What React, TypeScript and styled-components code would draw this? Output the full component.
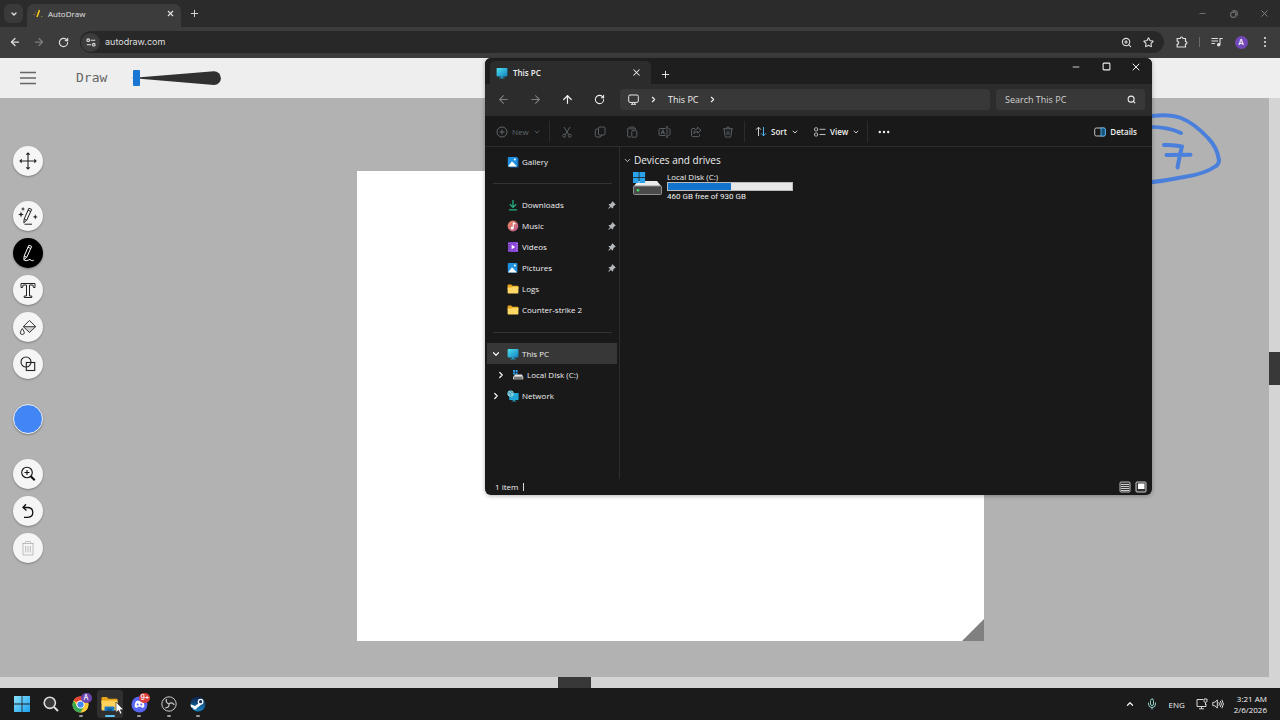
import React from 'react';
import styled, { createGlobalStyle, css } from 'styled-components';
import {
  ArrowLeft, ArrowRight, ArrowUp, ChevronDown, ChevronRight, ChevronUp, Minus, Plus,
  RotateCw, Search, Square, Star, X, ZoomIn, Mic,
} from 'lucide-react';

const uiFont = '"Open Sans", "Noto Sans", sans-serif';

const GlobalStyle = createGlobalStyle`
  *, *::before, *::after { box-sizing: border-box; }
  body { margin: 0; background: #b2b2b2; font-family: ${uiFont}; }
  button, input { font: inherit; color: inherit; }
  button { border: 0; padding: 0; margin: 0; background: none; display: inline-flex; align-items: center; justify-content: center; }
  a { color: inherit; text-decoration: none; }
  svg { display: block; flex: none; }
`;

const Desktop = styled.div`
  position: relative;
  min-height: 100vh;
  display: flex;
  flex-direction: column;
  overflow: hidden;
`;

/* ---------- Browser ---------- */

const TabStrip = styled.div`
  height: 27px;
  display: flex;
  align-items: flex-end;
  background: #2b2b2b;
  color: #e3e3e3;
  padding-left: 4px;
`;

const TabSearch = styled.button`
  width: 19px;
  height: 19px;
  margin-bottom: 4px;
  border-radius: 6px;
  background: #3a3a3a;
`;

const BrowserTab = styled.div`
  width: 154px;
  height: 23px;
  margin-left: 4px;
  padding: 0 6px 4px;
  display: flex;
  align-items: center;
  gap: 5px;
  border-radius: 7px 7px 0 0;
  background: #3c3c3c;
  font-size: 8px;
  line-height: 12px;
`;

const TabTitle = styled.span`
  flex: 1;
`;

const IconButton = styled.button<{ $w?: number; $dim?: boolean }>`
  width: ${p => p.$w ?? 24}px;
  height: 20px;
  flex: none;
  ${p => p.$dim && css`color: #7d7d7d;`}
`;

const NewTab = styled(IconButton)`
  height: 27px;
`;

const WindowControls = styled.div<{ $step: number }>`
  margin-left: auto;
  align-self: stretch;
  display: flex;
  align-items: center;
  color: #858585;
  button { width: ${p => p.$step}px; height: 100%; }
`;

const BrowserBar = styled.div`
  height: 31px;
  display: flex;
  align-items: center;
  background: #3c3c3c;
  color: #dedede;
  padding: 0 3px 1px;
`;

const Omnibox = styled.div`
  flex: 1;
  height: 22px;
  margin: 0 6px 0 5px;
  padding: 0 5px 0 1px;
  display: flex;
  align-items: center;
  border-radius: 11px;
  background: #282828;
`;

const SiteInfo = styled.button`
  width: 19px;
  height: 19px;
  border-radius: 50%;
  background: #3c3c3c;
`;

const UrlInput = styled.input`
  flex: 1;
  min-width: 0;
  margin-left: 5px;
  padding: 0;
  border: 0;
  outline: 0;
  background: none;
  font: 400 9px/14px Inter, sans-serif;
`;

const BarRule = styled.span`
  width: 1px;
  height: 10px;
  margin: 0 5px;
  background: #6a6a6a;
`;

const Avatar = styled.span`
  width: 13px;
  height: 13px;
  border-radius: 50%;
  background: #7248b9;
  color: #fff;
  font: 500 8px/13px Inter, sans-serif;
  text-align: center;
`;

/* ---------- AutoDraw page ---------- */

const PageHeader = styled.header`
  height: 40px;
  display: flex;
  align-items: center;
  padding-left: 20px;
  background: #eeeeee;
  color: #666;
`;

const ToolName = styled.span`
  margin: 0 24px 0 40px;
  font: 400 13px/20px "DejaVu Sans Mono", monospace;
`;

const Viewport = styled.div`
  flex: 1;
  display: grid;
  grid-template-columns: minmax(0, 1fr) 11px;
  grid-template-rows: minmax(0, 1fr) 11px;
  background: #d4d4d4;
`;

const Workspace = styled.main`
  position: relative;
  display: flex;
  align-items: flex-start;
  background: #b2b2b2;
`;

const ScrollRail = styled.div<{ $vertical?: boolean }>`
  display: flex;
  flex-direction: ${p => (p.$vertical ? 'column' : 'row')};
  ${p => (p.$vertical ? css`padding-top: 254px;` : css`padding-left: 558px;`)}
  &::before {
    content: '';
    background: #383838;
    flex: 0 0 33px;
  }
`;

const ToolRail = styled.nav`
  display: flex;
  flex-direction: column;
  gap: 25px;
  padding: 48px 13px 0;
`;

const ToolGroup = styled.div`
  display: flex;
  flex-direction: column;
  gap: 7px;
`;

const ToolButton = styled.button<{ $active?: boolean; $faded?: boolean }>`
  width: 30px;
  height: 30px;
  border-radius: 50%;
  background: ${p => (p.$active ? '#000' : '#f5f5f5')};
  color: ${p => (p.$active ? '#fff' : p.$faded ? '#bdbdbd' : '#222')};
  box-shadow: 0 1px 2px rgba(0, 0, 0, 0.3);
`;

const ColorButton = styled(ToolButton)`
  border: 1px solid #f5f5f5;
  background: #4285f4;
`;

const Artboard = styled.div`
  position: relative;
  flex: 0 1 627px;
  height: 470px;
  margin: 73px 0 0 301px;
  background: #fff;
  &::after {
    content: '';
    position: absolute;
    right: 0;
    bottom: 0;
    border-style: solid;
    border-width: 0 0 22px 22px;
    border-color: transparent transparent #808080;
  }
`;

const Scribble = styled.svg`
  position: absolute;
  left: 1140px;
  top: 10px;
`;

/* ---------- File Explorer ---------- */

const ExplorerWindow = styled.section`
  position: absolute;
  left: 485px;
  top: 58px;
  width: 667px;
  display: flex;
  flex-direction: column;
  overflow: hidden;
  border-radius: 6px;
  background: #191919;
  color: #f0f0f0;
  font-size: 8px;
  line-height: 12px;
  box-shadow: 0 1px 4px rgba(0, 0, 0, 0.3);
`;

const ExplorerTitle = styled.div`
  height: 26px;
  display: flex;
  align-items: flex-end;
  padding-left: 5px;
  background: #1e1e1e;
`;

const ExplorerTab = styled.div`
  width: 161px;
  height: 23px;
  padding: 0 9px 0 6px;
  display: flex;
  align-items: center;
  gap: 5px;
  border-radius: 5px 5px 0 0;
  background: #2c2c2c;
  font-weight: 600;
`;

const ExplorerControls = styled(WindowControls)`
  color: #f0f0f0;
  padding: 0 1px 9px 0;
`;

const NavBar = styled.div`
  height: 32px;
  display: flex;
  align-items: center;
  padding: 0 7px 1px 2px;
  background: #2c2c2c;
  font-size: 9px;
`;

const AddressBar = styled.div`
  flex: 1;
  height: 21px;
  margin-left: 5px;
  padding-left: 8px;
  display: flex;
  align-items: center;
  gap: 10px;
  border-radius: 3px;
  background: #383838;
`;

const SearchBox = styled.label`
  width: 149px;
  height: 21px;
  margin-left: 6px;
  padding: 0 9px;
  display: flex;
  align-items: center;
  border-radius: 3px;
  background: #383838;
  input {
    flex: 1;
    min-width: 0;
    padding: 0;
    border: 0;
    outline: 0;
    background: none;
  }
  input::placeholder { color: #d2d2d2; opacity: 1; }
`;

const CommandBar = styled.div`
  height: 31px;
  display: flex;
  align-items: center;
  padding: 1px 15px 0 1px;
  border-bottom: 1px solid #2d2d2d;
`;

const Command = styled.button<{ $w?: number; $dim?: boolean; $bold?: boolean }>`
  height: 24px;
  gap: 4px;
  ${p => p.$w && css`width: ${p.$w}px;`}
  color: ${p => (p.$dim ? '#60686c' : '#f0f0f0')};
  font-weight: ${p => (p.$bold ? 600 : 400)};
`;

const MenuCommand = styled(Command)`
  justify-content: flex-start;
  padding-left: 10px;
`;

const CommandRule = styled.span`
  width: 1px;
  height: 21px;
  background: #2b2b2b;
`;

const Spacer = styled.span`
  flex: 1;
`;

const ExplorerBody = styled.div`
  display: flex;
  height: 332px;
`;

const Sidebar = styled.nav`
  width: 135px;
  padding: 4px 2px 0;
  border-right: 1px solid #2d2d2d;
`;

const SideGroup = styled.ul<{ $h: number }>`
  list-style: none;
  margin: 0;
  padding: 0;
  height: ${p => p.$h}px;
  display: grid;
  grid-auto-rows: 1fr;
`;

const SideRule = styled.hr`
  height: 1px;
  border: 0;
  margin: 11px 5px 10px 6px;
  background: #333;
`;

const SideItem = styled.li<{ $selected?: boolean }>`
  display: flex;
  background: ${p => (p.$selected ? '#373737' : 'transparent')};
`;

const SideLink = styled.a<{ $nested?: boolean }>`
  flex: 1;
  display: flex;
  align-items: center;
  padding: 0 1px 0 ${p => (p.$nested ? 9 : 4)}px;
`;

const Twisty = styled.span`
  width: 16px;
  display: flex;
  align-items: center;
`;

const SideLabel = styled.span`
  flex: 1;
  margin-left: 3px;
  white-space: nowrap;
`;

const FileArea = styled.div`
  flex: 1;
  padding: 6px 0 0 3px;
`;

const GroupTitle = styled.h2`
  margin: 0;
  display: flex;
  align-items: center;
  gap: 2px;
  font-size: 10px;
  font-weight: 400;
  line-height: 14px;
`;

const Drive = styled.a`
  display: flex;
  gap: 5px;
  padding: 4px 0 0 10px;
`;

const DriveInfo = styled.div`
  width: 126px;
  display: flex;
  flex-direction: column;
  line-height: 11px;
`;

const DriveSpace = styled.span`
  font-family: Roboto, sans-serif;
`;

const UsageBar = styled.div`
  height: 9px;
  background: #e6e6e6;
  border: 1px solid #bcbcbc;
`;

const UsageFill = styled.div`
  height: 100%;
  background: #1173cc;
`;

const StatusBar = styled.footer`
  height: 16px;
  display: flex;
  align-items: center;
  gap: 4px;
  padding: 0 5px 0 10px;
`;

const StatusRule = styled.span`
  width: 1px;
  height: 8px;
  margin-left: 1px;
  background: #ddd;
`;

/* ---------- Taskbar ---------- */

const Taskbar = styled.footer`
  position: relative;
  height: 32px;
  display: flex;
  align-items: center;
  justify-content: space-between;
  padding: 0 13px 0 7px;
  background: #1b1b1b;
  color: #f2f2f2;
  font-size: 8px;
  line-height: 11px;
`;

const PinnedApps = styled.div`
  width: 206px;
  display: grid;
  grid-template-columns: repeat(7, 1fr);
  justify-items: center;
`;

const TaskButton = styled.button<{ $running?: boolean; $active?: boolean }>`
  position: relative;
  width: 26px;
  height: 28px;
  border-radius: 3px;
  background: ${p => (p.$active ? '#303030' : 'transparent')};
  &::after {
    content: '';
    display: ${p => (p.$running ? 'block' : 'none')};
    position: absolute;
    bottom: 1px;
    left: 50%;
    transform: translateX(-50%);
    width: ${p => (p.$active ? 10 : 4)}px;
    height: 2px;
    border-radius: 1px;
    background: ${p => (p.$active ? '#5cc3f5' : '#9a9a9a')};
  }
`;

const Badge = styled.span<{ $color: string }>`
  position: absolute;
  top: 3px;
  right: 2px;
  width: 11px;
  height: 10px;
  border-radius: 5px;
  background: ${p => p.$color};
  color: #fff;
  font: 500 7px/10px Inter, sans-serif;
  text-align: center;
`;

const Tray = styled.div`
  display: flex;
  align-items: center;
`;

const TrayPair = styled.button`
  gap: 4px;
  margin: 0 10px 0 5px;
`;

const Clock = styled.div`
  text-align: right;
`;

const Pointer = styled.svg`
  position: absolute;
  left: 115px;
  top: 13px;
`;

/* ---------- Icons ---------- */

const MonitorIcon = ({ size = 12 }: { size?: number }) => (
  <svg width={size} height={size} viewBox="0 0 12 12">
    <defs>
      <linearGradient id="screen" x1="0" y1="0" x2="1" y2="1">
        <stop offset="0" stopColor="#4be0ec" /><stop offset="1" stopColor="#1582c4" />
      </linearGradient>
    </defs>
    <path d="M5 9h2v1.6h1.6v.8H3.4v-.8H5z" fill="#2a93b8" />
    <rect x=".6" y="1" width="10.8" height="8.4" rx=".8" fill="url(#screen)" />
  </svg>
);

const NetworkIcon = () => (
  <svg width="12" height="12" viewBox="0 0 12 12">
    <path d="M6 9.600h2v1.200h1.400v.8H4.600v-.8H6z" fill="#2a93b8" />
    <rect x="2.200" y="3" width="9.400" height="7" rx=".7" fill="#22a6d6" />
    <circle cx="3.600" cy="3.600" r="3.200" fill="#86d4dc" />
    <path d="M1 3h2l1 1.300L3 6M4 .6 3.600 2 6.400 3" stroke="#2d7fae" strokeWidth=".8" fill="none" />
  </svg>
);

const PictureIcon = ({ stacked }: { stacked?: boolean }) => (
  <svg width="12" height="12" viewBox="0 0 12 12">
    {stacked && <path d="M2.500 2h9v9.500h-9z" fill="#1460a8" />}
    <rect x=".8" y="1" width="9.600" height="9.600" rx=".8" fill="#1f8fe0" />
    <path d="M1 10.500 5 5.300l5 5.200z" fill="#fff" />
    <circle cx="7.800" cy="3.600" r="1" fill="#fff" />
  </svg>
);

const DownloadIcon = () => (
  <svg width="12" height="12" viewBox="0 0 12 12" fill="none" stroke="#26b07f" strokeWidth="1.300">
    <path d="M6 1v7M2.800 5.200 6 8.400l3.200-3.200M2 10.800h8" />
  </svg>
);

const MusicIcon = () => (
  <svg width="12" height="12" viewBox="0 0 12 12">
    <defs><linearGradient id="music" x1="0" y1="0" x2="1" y2="1"><stop offset="0" stopColor="#f08a5c" /><stop offset="1" stopColor="#b5568f" /></linearGradient></defs>
    <circle cx="6" cy="6" r="5.400" fill="url(#music)" />
    <path d="M6.300 2.600v5" stroke="#fff" strokeWidth="1" />
    <path d="M6 2.500l2.400.6v1.300L6 3.800z" fill="#fff" />
    <circle cx="5.200" cy="8" r="1.500" fill="#fff" />
  </svg>
);

const VideoIcon = () => (
  <svg width="12" height="12" viewBox="0 0 12 12">
    <rect x="1" y="1" width="10" height="10" rx="1" fill="#8b45d6" />
    <path d="M1 1h2v10H1z" fill="#6a2fb5" />
    <path d="M2 2v8M10 2v8" stroke="#d9b8ff" strokeWidth=".9" strokeDasharray="1 1.300" />
    <path d="M4.700 3.800 8.200 6 4.700 8.200z" fill="#fff" />
  </svg>
);

const FolderIcon = () => (
  <svg width="12" height="12" viewBox="0 0 12 12">
    <path d="M.6 2.200q0-.7.7-.7h3l1.200 1.300h5.200q.7 0 .7.7V6H.6z" fill="#e9a51e" />
    <path d="M.6 4.600h4l1-.9h5.800v6.100q0 .7-.7.7H1.300q-.7 0-.7-.7z" fill="#ffd866" />
  </svg>
);

const SmallDriveIcon = () => (
  <svg width="12" height="12" viewBox="0 0 12 12">
    <path d="M1 1h2v2H1zM3.600 1h2v2h-2zM1 3.600h2v2H1zM3.600 3.600h2v2h-2z" fill="#2f9be6" />
    <path d="M3 5.600h7l1 2.200H1.500z" fill="#e8e8e8" />
    <path d="M1 7.600h10.300v2.800H1z" fill="#c5c5c5" />
    <path d="M2 8.400h8.300v1.200H2z" fill="#444" />
  </svg>
);

const DriveIcon = () => (
  <svg width="29" height="26" viewBox="0 0 29 26">
    <path d="M5 10h19l4.500 5.500H.5z" fill="#ececec" />
    <rect x=".5" y="15" width="28" height="8.500" rx="1" fill="#4a4a4a" stroke="#909090" strokeWidth="1" />
    <circle cx="5" cy="19.200" r="1.300" fill="#3fe05d" />
    <path d="M0 1h5.700v5.200H0zM6.400 1h5.700v5.200H6.400zM0 6.900h5.700v5.200H0zM6.400 6.900h5.700v5.200H6.400z" fill="#2aa3ea" />
  </svg>
);

const PinIcon = () => (
  <svg width="8" height="8" viewBox="0 0 8 8">
    <path d="M4.500.3 7.700 3.500 7 4.300 6.500 4.300 5.200 5.700 5.200 7 4.500 7.500 2.900 5.900.9 7.700.3 7.200 2.100 5.100.5 3.600 1.100 2.900 2.500 2.900 3.800 1.600 3.700 1.100z" fill="#b4b8ba" />
  </svg>
);

const PcOutline = () => (
  <svg width="11" height="11" viewBox="0 0 11 11" fill="none" stroke="#e6e6e6">
    <rect x=".7" y="1" width="9.600" height="7.400" rx="1.300" /><path d="M3 10.300h5M4.300 8.500v1.600M6.700 8.500v1.600" />
  </svg>
);

const CutIcon = () => (
  <svg width="12" height="12" viewBox="0 0 12 12" fill="none" stroke="currentColor" strokeWidth=".9">
    <path d="M3 1l4.700 7.500M9 1 4.300 8.500" /><circle cx="3.200" cy="9.700" r="1.500" /><circle cx="8.800" cy="9.700" r="1.500" />
  </svg>
);

const CopyIcon = () => (
  <svg width="12" height="12" viewBox="0 0 12 12" fill="none" stroke="currentColor" strokeWidth=".9">
    <rect x="4.500" y="1" width="6.500" height="8" rx="1.200" /><path d="M4.500 3H2.700Q1.300 3 1.300 4.400V9.500Q1.300 11 2.800 11H6q1.300 0 1.500-1.800" />
  </svg>
);

const PasteIcon = () => (
  <svg width="12" height="12" viewBox="0 0 12 12" fill="none" stroke="currentColor" strokeWidth=".9">
    <path d="M5 11H2.700q-1 0-1-1V3q0-1 1-1H4M8 2q1.500 0 1.500 1v1" /><rect x="4" y="1" width="4" height="2" rx=".8" /><rect x="5.800" y="4.700" width="5" height="6.500" rx="1" />
  </svg>
);

const RenameIcon = () => (
  <svg width="13" height="12" viewBox="0 0 13 12" fill="none" stroke="currentColor" strokeWidth=".9">
    <path d="M7.500 2.500H2.200Q1 2.500 1 3.700v4.600q0 1.200 1.200 1.200h5.300M10.300 2.500q1.700 0 1.700 1.200v4.600q0 1.200-1.700 1.200M9 1v10M7.800.8h2.400M7.800 11.200h2.400M3 8.200l1.800-4.500 1.800 4.500M3.600 6.800h2.400" />
  </svg>
);

const ShareIcon = () => (
  <svg width="12" height="12" viewBox="0 0 12 12" fill="none" stroke="currentColor" strokeWidth=".9">
    <path d="M5 2.500H2.800q-1.300 0-1.300 1.300v5.500q0 1.300 1.300 1.300h5.500q1.300 0 1.300-1.300V8.300M7.500 1.200l3.500 3-3.500 3V5.500Q5 5.400 3.800 7.800 4 3.300 7.500 2.900z" />
  </svg>
);

const DeleteIcon = () => (
  <svg width="12" height="12" viewBox="0 0 12 12" fill="none" stroke="currentColor" strokeWidth=".9">
    <path d="M1 2.800h10M4.500 2.700q0-1.700 1.500-1.700t1.500 1.700M2.200 2.900l.8 7q.1 1.200 1.200 1.200h3.600q1.100 0 1.200-1.200l.8-7M5 5v4M7 5v4" />
  </svg>
);

const SortIcon = () => (
  <svg width="12" height="11" viewBox="0 0 12 11" fill="none" strokeWidth="1">
    <path d="M3.500 10V1.200M1 3.700l2.500-2.500L6 3.700" stroke="#cfcfcf" /><path d="M8.500 1v8.800M6 7.300l2.500 2.500L11 7.300" stroke="#4cb2f0" />
  </svg>
);

const ViewIcon = () => (
  <svg width="12" height="10" viewBox="0 0 12 10" fill="none" stroke="#cfcfcf" strokeWidth=".9">
    <rect x=".6" y=".8" width="3" height="3" rx=".8" /><rect x=".6" y="6" width="3" height="3" rx=".8" /><path d="M5.500 2.300h6M5.500 7.500h6" />
  </svg>
);

const DetailsIcon = () => (
  <svg width="12" height="10" viewBox="0 0 12 10">
    <rect x=".7" y="1" width="10.600" height="8" rx="1.600" fill="none" stroke="#d5d5d5" strokeWidth=".9" />
    <path d="M7 1h2.700q1.600 0 1.600 1.600v4.800Q11.300 9 9.700 9H7z" fill="#15527a" stroke="#4cb2f0" strokeWidth=".9" />
  </svg>
);

const MoveIcon = () => (
  <svg width="20" height="20" viewBox="0 0 20 20" fill="none" stroke="currentColor" strokeWidth="1.100">
    <path d="M10 2v16M2 10h16M8.300 3.700 10 2l1.700 1.700M8.300 16.300 10 18l1.700-1.700M3.700 8.300 2 10l1.700 1.700M16.300 8.300 18 10l-1.700 1.700" />
  </svg>
);

const PencilIcon = ({ sparkles }: { sparkles?: boolean }) => (
  <svg width="20" height="20" viewBox="0 0 20 20" fill="none" stroke="currentColor" strokeWidth="1">
    <path d="M10.900 2.200 6.200 13 5.800 16.800 8.700 14.300 13.700 3.400zM6.200 13 8.700 14.300M10 4.200l2.800 1.300" />
    {sparkles ? (
      <>
        <path d="M6.500 18.200h7.500" />
        <path d="m3 5.500.8 2.200L6 8.500 3.800 9.300 3 11.500 2.200 9.300 0 8.500 2.200 7.700zM5 .8l.6 1.600 1.600.6-1.600.6L5 5.200 4.400 3.600 2.800 3l1.600-.6zM17.300 8.300l.7 1.900 1.900.7-1.900.7-.7 1.900-.7-1.900-1.900-.7 1.900-.7z" fill="currentColor" stroke="none" />
      </>
    ) : <path d="M6 16.800q2 1.800 4.200.3t3 .3q.8.800 2.500-.2" />}
  </svg>
);

const TypeIcon = () => (
  <svg width="20" height="20" viewBox="0 0 20 20" fill="none" stroke="currentColor" strokeWidth="1">
    <path d="M3 3.500h14v4h-1.500L14.800 5h-3.300v11h2.300v1.500H6.200V16h2.300V5H5.200L4.500 7.500H3z" />
  </svg>
);

const FillIcon = () => (
  <svg width="20" height="20" viewBox="0 0 20 20" fill="none" stroke="currentColor" strokeWidth=".9">
    <path d="M5.500 9.800h12l-6 5.600z" fill="#cfcfcf" stroke="none" />
    <path d="M11.500 3.500 17.700 9.600 11.500 15.500 5.300 9.600zM5.300 9.700h12.400M4.300 11.500q-4 5.700 0 6 4-.3 0-6z" />
  </svg>
);

const ShapesIcon = () => (
  <svg width="20" height="20" viewBox="0 0 20 20" fill="none" stroke="currentColor" strokeWidth="1.100">
    <circle cx="8" cy="8" r="5" /><rect x="8.300" y="8.500" width="8.400" height="8" />
  </svg>
);

const ZoomTool = () => (
  <svg width="20" height="20" viewBox="0 0 20 20" fill="none" stroke="#111" strokeWidth="1.100">
    <circle cx="9" cy="8.500" r="5.300" /><path d="M6.500 8.500h5M9 6v5" /><path d="m12.700 12.300 4 4" strokeWidth="2" />
  </svg>
);

const UndoTool = () => (
  <svg width="20" height="20" viewBox="0 0 20 20" fill="none" stroke="#111" strokeWidth="1.300">
    <path d="M8 3.300 5 6.500l3.500 3M5.300 6.500h4.500q5 .3 5 5t-5 4.800H6" />
  </svg>
);

const BinTool = () => (
  <svg width="20" height="20" viewBox="0 0 20 20" fill="none" stroke="currentColor" strokeWidth="1">
    <path d="M4 5.500h12M7 5.300 7.700 3.500h4.600l.7 1.800M5 5.500V17h10V5.500M7.700 8v6.500M10 8v6.500M12.300 8v6.500" />
  </svg>
);

const ChromeIcon = () => (
  <svg width="17" height="17" viewBox="0 0 16 16">
    <circle cx="8" cy="8" r="7.500" fill="#fcc934" />
    <path d="M8 8 1.500 4.250A7.500 7.500 0 0 1 14.500 4.250H8z" fill="#ea4335" />
    <path d="M8 8v-3.700h6.500A7.500 7.500 0 0 1 8 15.500L11.300 9.800z" fill="#fcc934" />
    <path d="M1.500 4.250A7.500 7.500 0 0 0 8 15.500l3.200-5.700L8 11.600 4.700 9.700z" fill="#34a853" />
    <circle cx="8" cy="8" r="3.700" fill="#fff" /><circle cx="8" cy="8" r="2.900" fill="#4285f4" />
  </svg>
);

const ExplorerIcon = () => (
  <svg width="17" height="16" viewBox="0 0 17 16">
    <path d="M.5 2q0-1 1-1h4.300l1.700 1.700h8q1 0 1 1V8H.5z" fill="#e8a317" />
    <path d="M.5 4.500h16v9q0 1-1 1h-14q-1 0-1-1z" fill="#ffd35c" />
    <path d="M3.500 15v-3.500q0-1 1-1h8q1 0 1 1V15z" fill="#1a7ac0" /><path d="M6 12.500h5V15H6z" fill="#0f5b96" />
  </svg>
);

const DiscordIcon = () => (
  <svg width="17" height="17" viewBox="0 0 17 17">
    <circle cx="8.500" cy="8.500" r="8" fill="#5865f2" />
    <path d="M5 5.300q1.200-.7 2.300-.8l.3.600h1.800l.3-.6q1.100.1 2.300.8 1.600 2.700 1.400 5.500-1.100.9-2.500 1.200l-.6-1 .5-.3H6.200l.5.300-.6 1q-1.400-.3-2.500-1.200Q3.400 8 5 5.300z" fill="#fff" />
    <circle cx="6.700" cy="8.600" r="1" fill="#5865f2" /><circle cx="10.300" cy="8.600" r="1" fill="#5865f2" />
  </svg>
);

const ObsIcon = () => (
  <svg width="16" height="16" viewBox="0 0 16 16" fill="none" stroke="#c9c9c9">
    <circle cx="8" cy="8" r="7.200" fill="#222" />
    <path d="M8 8Q4.300 6.800 5.500 3M8 8q2.700-2.700 5.300.8M8 8q.3 3.800-3.700 3.800" strokeWidth="1.200" />
  </svg>
);

const SteamIcon = () => (
  <svg width="16" height="16" viewBox="0 0 16 16">
    <defs><linearGradient id="steam" x1="0" y1="0" x2="0" y2="1"><stop offset="0" stopColor="#0d1c44" /><stop offset="1" stopColor="#1687c4" /></linearGradient></defs>
    <circle cx="8" cy="8" r="7.500" fill="url(#steam)" />
    <path d="M.6 8.200 5 10l3-2.300 2-2 2 2-2.400 2.400-2.700 2q-.3 1.500-1.900 1.500t-2-1.600L.9 10.900z" fill="#fff" />
    <circle cx="10.600" cy="5.700" r="2.900" fill="#fff" /><circle cx="10.600" cy="5.700" r="1.600" fill="#16315f" />
  </svg>
);

/* ---------- Composition ---------- */

const sideItems = [
  { label: 'Downloads', icon: <DownloadIcon />, pinned: true },
  { label: 'Music', icon: <MusicIcon />, pinned: true },
  { label: 'Videos', icon: <VideoIcon />, pinned: true },
  { label: 'Pictures', icon: <PictureIcon />, pinned: true },
  { label: 'Logs', icon: <FolderIcon /> },
  { label: 'Counter-strike 2', icon: <FolderIcon /> },
];

interface SideRowProps {
  label: string;
  icon: React.ReactNode;
  pinned?: boolean;
  selected?: boolean;
  nested?: boolean;
  twisty?: React.ReactNode;
}

const SideRow = ({ label, icon, pinned, selected, nested, twisty }: SideRowProps) => (
  <SideItem $selected={selected}>
    <SideLink href="#" $nested={nested}>
      <Twisty>{twisty}</Twisty>
      {icon}
      <SideLabel>{label}</SideLabel>
      {pinned && <PinIcon />}
    </SideLink>
  </SideItem>
);

const Browser = () => (
  <>
    <TabStrip>
      <TabSearch aria-label="Search tabs"><ChevronDown size={8} strokeWidth={4} /></TabSearch>
      <BrowserTab>
        <svg width="10" height="10" viewBox="0 0 10 10">
          <path d="M6.500 1 4 8" stroke="#f5c518" strokeWidth="1.600" /><path d="M.5 5.500h1.500M8 7.500h1.500M2 3l1 .6" stroke="#8a7a3a" />
        </svg>
        <TabTitle>AutoDraw</TabTitle>
        <button aria-label="Close tab"><X size={9} strokeWidth={3} /></button>
      </BrowserTab>
      <NewTab $w={26} aria-label="New tab"><Plus size={11} strokeWidth={2} /></NewTab>
      <WindowControls $step={31}>
        <button aria-label="Minimize"><Minus size={9} strokeWidth={2} /></button>
        <button aria-label="Restore">
          <svg width="8" height="8" viewBox="0 0 8 8" fill="none" stroke="currentColor"><rect x=".8" y="2.200" width="5" height="5" rx="1" /><path d="M2.500.8h3q1.700 0 1.700 1.700v3" /></svg>
        </button>
        <button aria-label="Close"><X size={11} strokeWidth={2} /></button>
      </WindowControls>
    </TabStrip>
    <BrowserBar>
      <IconButton aria-label="Back"><ArrowLeft size={12} strokeWidth={2.500} /></IconButton>
      <IconButton $dim aria-label="Forward"><ArrowRight size={12} strokeWidth={2.500} /></IconButton>
      <IconButton aria-label="Reload"><RotateCw size={11} strokeWidth={2.600} /></IconButton>
      <Omnibox>
        <SiteInfo aria-label="Site information">
          <svg width="10" height="9" viewBox="0 0 10 9" fill="none" stroke="#e0e0e0" strokeWidth="1.100">
            <circle cx="2.200" cy="2.200" r="1.300" /><path d="M4.800 2.200h4.400M.8 6.700h4.400" /><circle cx="7.800" cy="6.700" r="1.300" />
          </svg>
        </SiteInfo>
        <UrlInput aria-label="Address" defaultValue="autodraw.com" />
        <IconButton $w={22} aria-label="Zoom"><ZoomIn size={11} strokeWidth={2.400} /></IconButton>
        <IconButton $w={22} aria-label="Bookmark"><Star size={11} strokeWidth={2.400} /></IconButton>
      </Omnibox>
      <IconButton $w={24} aria-label="Extensions">
        <svg width="12" height="12" viewBox="0 0 12 12" fill="none" stroke="currentColor" strokeWidth="1.200">
          <path d="M1.200 2.500h3q.2-1.500 1.400-1.500T7 2.500h2.500v3Q11 5.600 11 6.800T9.500 8.200v2.800H1.200V8.300q1.500-.2 1.500-1.500T1.200 5.200z" />
        </svg>
      </IconButton>
      <BarRule />
      <IconButton $w={24} aria-label="Media controls">
        <svg width="12" height="10" viewBox="0 0 12 10" fill="none" stroke="currentColor" strokeWidth="1.100">
          <path d="M.5 1.500h6.500M.5 4h6.500M.5 6.500h3.500M9 7.500V1.500h2.700" /><circle cx="7.700" cy="7.700" r="1.200" fill="currentColor" />
        </svg>
      </IconButton>
      <IconButton $w={24} aria-label="Profile"><Avatar>A</Avatar></IconButton>
      <IconButton $w={24} aria-label="Menu">
        <svg width="4" height="12" viewBox="0 0 4 12" fill="currentColor"><circle cx="2" cy="2" r="1.100" /><circle cx="2" cy="6" r="1.100" /><circle cx="2" cy="10" r="1.100" /></svg>
      </IconButton>
    </BrowserBar>
  </>
);

const DrawPage = () => (
  <>
    <PageHeader>
      <button aria-label="Menu">
        <svg width="16" height="14" viewBox="0 0 16 14" stroke="#666" strokeWidth="1.300"><path d="M0 1.500h16M0 7h16M0 12.500h16" /></svg>
      </button>
      <ToolName>Draw</ToolName>
      <svg width="92" height="18" viewBox="0 0 92 18" role="img" aria-label="Brush size">
        <path d="M-1 9 83 2.300a6.900 6.900 0 0 1 0 13.800z" fill="#303030" />
        <rect x="2" y="1" width="7" height="16" rx="1" fill="#1976d2" />
      </svg>
    </PageHeader>
    <Viewport>
      <Workspace>
        <ToolRail aria-label="Drawing tools">
          <ToolGroup><ToolButton aria-label="Select"><MoveIcon /></ToolButton></ToolGroup>
          <ToolGroup>
            <ToolButton aria-label="AutoDraw"><PencilIcon sparkles /></ToolButton>
            <ToolButton $active aria-label="Draw"><PencilIcon /></ToolButton>
            <ToolButton aria-label="Type"><TypeIcon /></ToolButton>
            <ToolButton aria-label="Fill"><FillIcon /></ToolButton>
            <ToolButton aria-label="Shape"><ShapesIcon /></ToolButton>
          </ToolGroup>
          <ToolGroup><ColorButton aria-label="Color" /></ToolGroup>
          <ToolGroup>
            <ToolButton aria-label="Zoom"><ZoomTool /></ToolButton>
            <ToolButton aria-label="Undo"><UndoTool /></ToolButton>
            <ToolButton $faded aria-label="Delete"><BinTool /></ToolButton>
          </ToolGroup>
        </ToolRail>
        <Artboard />
        <Scribble width="90" height="84" viewBox="1140 108 90 84" fill="none" stroke="#4a80dc" strokeWidth="4" strokeLinecap="round" strokeLinejoin="round">
          <path d="M1144 117Q1168 113 1181 118 1194 123 1208 138 1217 147 1219 160 1219 164 1216 166 1205 174 1184 177 1165 181 1144 183" />
          <path d="M1144 127q22-1 37 6M1164 145q10-.5 18 1.500l-2 8-2.500 13M1166.500 155l24-.3" />
        </Scribble>
      </Workspace>
      <ScrollRail $vertical />
      <ScrollRail />
    </Viewport>
  </>
);

const caret = <ChevronDown size={8} strokeWidth={2.500} />;

const Explorer = () => (
  <ExplorerWindow aria-label="This PC">
    <ExplorerTitle>
      <ExplorerTab>
        <MonitorIcon />
        <TabTitle>This PC</TabTitle>
        <button aria-label="Close tab"><X size={11} strokeWidth={2.200} /></button>
      </ExplorerTab>
      <IconButton $w={29} aria-label="New tab"><Plus size={11} strokeWidth={2} /></IconButton>
      <ExplorerControls $step={30}>
        <button aria-label="Minimize"><Minus size={10} strokeWidth={2} /></button>
        <button aria-label="Maximize"><Square size={9} strokeWidth={2.800} /></button>
        <button aria-label="Close"><X size={12} strokeWidth={2} /></button>
      </ExplorerControls>
    </ExplorerTitle>
    <NavBar>
      <IconButton $w={32} $dim aria-label="Back"><ArrowLeft size={13} strokeWidth={2} /></IconButton>
      <IconButton $w={32} $dim aria-label="Forward"><ArrowRight size={13} strokeWidth={2} /></IconButton>
      <IconButton $w={32} aria-label="Up"><ArrowUp size={13} strokeWidth={2.200} /></IconButton>
      <IconButton $w={32} aria-label="Refresh"><RotateCw size={11} strokeWidth={2.200} /></IconButton>
      <AddressBar>
        <PcOutline />
        <ChevronRight size={9} strokeWidth={3} />
        <span>This PC</span>
        <ChevronRight size={9} strokeWidth={3} />
      </AddressBar>
      <SearchBox>
        <input aria-label="Search This PC" placeholder="Search This PC" />
        <Search size={9} strokeWidth={2.800} />
      </SearchBox>
    </NavBar>
    <CommandBar>
      <MenuCommand $w={63} $dim>
        <svg width="12" height="12" viewBox="0 0 12 12" fill="none" stroke="currentColor"><circle cx="6" cy="6" r="5" /><path d="M6 3.500v5M3.500 6h5" /></svg>
        New {caret}
      </MenuCommand>
      <CommandRule />
      <Command $w={34} $dim aria-label="Cut"><CutIcon /></Command>
      <Command $w={32} $dim aria-label="Copy"><CopyIcon /></Command>
      <Command $w={32} $dim aria-label="Paste"><PasteIcon /></Command>
      <Command $w={32} $dim aria-label="Rename"><RenameIcon /></Command>
      <Command $w={32} $dim aria-label="Share"><ShareIcon /></Command>
      <Command $w={32} $dim aria-label="Delete"><DeleteIcon /></Command>
      <CommandRule />
      <MenuCommand $w={59} $bold><SortIcon />Sort {caret}</MenuCommand>
      <MenuCommand $w={63} $bold><ViewIcon />View {caret}</MenuCommand>
      <CommandRule />
      <Command $w={32} aria-label="More">
        <svg width="12" height="4" viewBox="0 0 12 4" fill="currentColor"><circle cx="1.800" cy="2" r="1.200" /><circle cx="6" cy="2" r="1.200" /><circle cx="10.200" cy="2" r="1.200" /></svg>
      </Command>
      <Spacer />
      <Command $bold><DetailsIcon />Details</Command>
    </CommandBar>
    <ExplorerBody>
      <Sidebar aria-label="Folders">
        <SideGroup $h={21}><SideRow label="Gallery" icon={<PictureIcon stacked />} /></SideGroup>
        <SideRule />
        <SideGroup $h={127}>{sideItems.map(item => <SideRow key={item.label} {...item} />)}</SideGroup>
        <SideRule />
        <SideGroup $h={64}>
          <SideRow selected label="This PC" icon={<MonitorIcon />} twisty={<ChevronDown size={10} strokeWidth={3} />} />
          <SideRow nested label="Local Disk (C:)" icon={<SmallDriveIcon />} twisty={<ChevronRight size={10} strokeWidth={3} />} />
          <SideRow label="Network" icon={<NetworkIcon />} twisty={<ChevronRight size={10} strokeWidth={3} />} />
        </SideGroup>
      </Sidebar>
      <FileArea>
        <GroupTitle><ChevronDown size={9} strokeWidth={2} />Devices and drives</GroupTitle>
        <Drive href="#">
          <DriveIcon />
          <DriveInfo>
            <span>Local Disk (C:)</span>
            <UsageBar role="img" aria-label="Space used"><UsageFill style={{ width: `${(470 / 930) * 100}%` }} /></UsageBar>
            <DriveSpace>460 GB free of 930 GB</DriveSpace>
          </DriveInfo>
        </Drive>
      </FileArea>
    </ExplorerBody>
    <StatusBar>
      <span>1 item</span>
      <StatusRule />
      <Spacer />
      <button aria-label="Details view">
        <svg width="12" height="12" viewBox="0 0 12 12"><rect x="1" y="1" width="10" height="10" rx="1" fill="#333" stroke="#bbb" /><path d="M2 3.500h8M2 5.500h8M2 7.500h8M2 9.500h8" stroke="#ccc" /></svg>
      </button>
      <button aria-label="Icon view">
        <svg width="12" height="12" viewBox="0 0 12 12"><rect x="1" y="1" width="10" height="10" rx="1" fill="#333" stroke="#ccc" /><path d="M3 2.500h6.500V8H3z" fill="#fff" /></svg>
      </button>
    </StatusBar>
  </ExplorerWindow>
);

const SystemBar = () => (
  <Taskbar>
    <PinnedApps>
      <TaskButton aria-label="Start">
        <svg width="16" height="16" viewBox="0 0 16 16">
          <defs><linearGradient id="start" x1="0" y1="0" x2="1" y2="1"><stop offset="0" stopColor="#8be2ff" /><stop offset="1" stopColor="#1ba1ee" /></linearGradient></defs>
          <path d="M0 0h7.600v7.600H0zM8.400 0H16v7.600H8.400zM0 8.400h7.600V16H0zM8.400 8.400H16V16H8.400z" fill="url(#start)" />
        </svg>
      </TaskButton>
      <TaskButton aria-label="Search">
        <svg width="16" height="16" viewBox="0 0 16 16" fill="none" stroke="#dcdcdc" strokeWidth="1.600"><circle cx="6.800" cy="6.800" r="5.600" fill="#3a3a3a" /><path d="m11 11 4 4" strokeWidth="2" /></svg>
      </TaskButton>
      <TaskButton $running aria-label="Chrome"><ChromeIcon /><Badge $color="#6b46b0">A</Badge></TaskButton>
      <TaskButton $running $active aria-label="File Explorer"><ExplorerIcon /></TaskButton>
      <TaskButton $running aria-label="Discord"><DiscordIcon /><Badge $color="#d83c3e">9+</Badge></TaskButton>
      <TaskButton $running aria-label="OBS"><ObsIcon /></TaskButton>
      <TaskButton $running aria-label="Steam"><SteamIcon /></TaskButton>
    </PinnedApps>
    <Tray>
      <IconButton $w={22} aria-label="Hidden icons"><ChevronUp size={10} strokeWidth={3} /></IconButton>
      <IconButton $w={22} aria-label="Microphone"><Mic size={12} strokeWidth={2} color="#8fd0c4" /></IconButton>
      <IconButton $w={28} aria-label="Language">ENG</IconButton>
      <TrayPair aria-label="Network and volume">
        <svg width="12" height="12" viewBox="0 0 12 12" fill="none" stroke="#d8d8d8" strokeWidth="1"><path d="M7 1.500H1v7h9V6M3 10.800h5M5.500 8.500v2.300M8 1v2.300q0 1 1.500 1T11 3.300V1zM9.500 4.300V7" /></svg>
        <svg width="12" height="12" viewBox="0 0 12 12" fill="none" stroke="#d8d8d8" strokeWidth="1"><path d="M.8 4.300h1.900L5.300 2v8L2.700 7.700H.8zM6.800 4.300q1.300 1.700 0 3.400M8.300 3q2.300 3 0 6M9.900 1.800q3 4.200 0 8.400" /></svg>
      </TrayPair>
      <Clock><div>3:21 AM</div><div>2/6/2026</div></Clock>
    </Tray>
    <Pointer width="9" height="14" viewBox="0 0 9 14"><path d="M1 1v10.500l2.500-2.200 1.700 3.700 1.700-.8L5.300 8.700h3.200z" fill="#fff" stroke="#222" strokeWidth=".6" /></Pointer>
  </Taskbar>
);

export default function App() {
  return (
    <Desktop>
      <GlobalStyle />
      <Browser />
      <DrawPage />
      <Explorer />
      <SystemBar />
    </Desktop>
  );
}
